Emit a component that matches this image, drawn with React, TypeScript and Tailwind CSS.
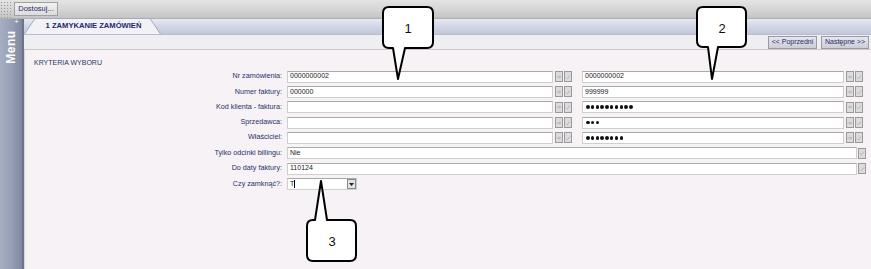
import React from "react";

const font = { fontFamily: '"Liberation Sans", Arial, sans-serif' };

function MiniBtn({ kind }: { kind: "a" | "b" }) {
  return (
    <div className="w-[8px] h-[11px] border border-[#9a9a9a] bg-[#dcdcdc] flex items-center justify-center">
      {kind === "a" ? (
        <svg width="6" height="6" viewBox="0 0 6 6">
          <path d="M0.5 3h4M3 1.5l1.5 1.5-1.5 1.5" stroke="#a8a8a8" strokeWidth="0.8" fill="none" />
        </svg>
      ) : (
        <svg width="6" height="6" viewBox="0 0 6 6">
          <path d="M1 3.5l1.3 1.3L5 1.5" stroke="#a8a8a8" strokeWidth="0.8" fill="none" />
        </svg>
      )}
    </div>
  );
}

function Input({ w, children }: { w: string; children?: React.ReactNode }) {
  return (
    <div
      className={`${w} h-[12px] bg-white border border-[#cfcfcf] border-t-[#a9a9a9] flex items-center pl-[2px] text-[7px] text-[#222] overflow-hidden`}
    >
      {children}
    </div>
  );
}

function Dots({ n }: { n: number }) {
  return (
    <div className="flex gap-[1.3px] pl-[1px]">
      {Array.from({ length: n }).map((_, i) => (
        <div key={i} className="w-[3.5px] h-[3.5px] rounded-full bg-[#111]" />
      ))}
    </div>
  );
}

function Label({ text }: { text: string }) {
  return (
    <div className="w-[257px] text-right text-[7.2px] text-[#28306a] whitespace-nowrap">{text}</div>
  );
}

function DoubleRow({
  label,
  a,
  b,
}: {
  label: string;
  a?: React.ReactNode;
  b?: React.ReactNode;
}) {
  return (
    <div className="flex items-center h-[15.3px]">
      <Label text={label} />
      <div className="ml-[5px]">
        <Input w="w-[266px]">{a}</Input>
      </div>
      <div className="ml-[2px] flex gap-[1px]">
        <MiniBtn kind="a" />
        <MiniBtn kind="b" />
      </div>
      <div className="ml-[10px]">
        <Input w="w-[262px]">{b}</Input>
      </div>
      <div className="ml-[2px] flex gap-[1px]">
        <MiniBtn kind="a" />
        <MiniBtn kind="b" />
      </div>
    </div>
  );
}

function WideRow({ label, value }: { label: string; value: string }) {
  return (
    <div className="flex items-center h-[15.5px]">
      <Label text={label} />
      <div className="ml-[5px]">
        <Input w="w-[570px]">{value}</Input>
      </div>
      <div className="ml-[1px]">
        <MiniBtn kind="b" />
      </div>
    </div>
  );
}

function Callouts() {
  return (
    <svg className="absolute left-0 top-0 pointer-events-none" width="871" height="269" viewBox="0 0 871 269">
      <g fill="#fff" stroke="#000" strokeWidth="2" strokeLinejoin="round">
        <path d="M389 7 H427 Q433 7 433 13 V42 Q433 48 427 48 H405 L398 79 L393 48 H389 Q383 48 383 42 V13 Q383 7 389 7 Z" />
        <path d="M703 7 H740 Q746 7 746 13 V41 Q746 47 740 47 H718 L712 79 L708 47 H703 Q697 47 697 41 V13 Q697 7 703 7 Z" />
        <path d="M313 220 H315 L321 181 L327 220 H350 Q356 220 356 226 V255 Q356 261 350 261 H313 Q307 261 307 255 V226 Q307 220 313 220 Z" />
      </g>
      <g fontFamily="Liberation Sans, Arial, sans-serif" fontSize="13" fill="#111" textAnchor="middle">
        <text x="408" y="33">1</text>
        <text x="722" y="33">2</text>
        <text x="332" y="246">3</text>
      </g>
    </svg>
  );
}

export default function App() {
  return (
    <div className="relative w-[871px] h-[269px] overflow-hidden bg-[#f6f2f6] flex flex-col" style={font}>
      {/* Top toolbar */}
      <div className="h-[19px] flex items-start bg-gradient-to-b from-[#e4e4e4] via-[#d6d6d6] to-[#c4c4c4] border-b border-[#b0b0b0]">
        <div className="w-[12px] h-[17px] mt-[1px] bg-[radial-gradient(circle,#9a9a9a_0.8px,transparent_0.9px)] bg-[length:3px_3px]" />
        <div className="ml-[2px] mt-[2px] h-[14px] w-[44px] border border-[#a0a0a0] bg-gradient-to-b from-[#f2f2f2] to-[#dcdcdc] flex items-center justify-center text-[7.5px] text-[#1f2a66]">
          Dostosuj...
        </div>
      </div>

      <div className="flex flex-1 min-h-0">
        {/* Sidebar */}
        <div className="w-[24px] relative bg-gradient-to-r from-[#a6aec2] via-[#97a0b6] to-[#7f889f] border-r-2 border-[#6c7488]">
          <div className="absolute right-[3px] top-[-1px] text-[8px] text-white leading-none">+</div>
          <div className="absolute left-[3px] top-[10px] h-[36px] w-[16px] flex items-center justify-center">
            <div className="-rotate-90 text-[12px] font-bold text-white tracking-[0.5px]">Menu</div>
          </div>
        </div>

        {/* Main */}
        <div className="flex-1 flex flex-col">
          {/* Tab strip */}
          <div className="h-[16px] flex items-end bg-gradient-to-b from-[#e8e9f2] via-[#d2d5e6] to-[#c3c7dc] border-b border-[#b8bccf]">
            <div className="relative w-[137px] h-[16px] flex items-center justify-center">
              <svg className="absolute left-0 top-0" width="137" height="16" viewBox="0 0 137 16">
                <path d="M0.5 16 L11 0.5 H126 L136.5 16" fill="#f1f1f6" stroke="#a6a9bd" strokeWidth="1" />
              </svg>
              <span className="relative text-[7.6px] font-bold text-[#1b2a6e] ml-[2px]">1 ZAMYKANIE ZAMÓWIEŃ</span>
            </div>
          </div>
          {/* Nav row */}
          <div className="h-[15px] bg-[#efeff2] border-b border-[#c9c9cc] flex items-center justify-end pr-[2px] gap-[4px]">
            <div className="h-[13px] w-[49px] border border-[#9a9aa4] bg-gradient-to-b from-[#e6e6ee] to-[#cdcdd8] flex items-center justify-center text-[7px] text-[#1f2a66] whitespace-nowrap">
              &lt;&lt; Poprzedni
            </div>
            <div className="h-[13px] w-[48px] border border-[#9a9aa4] bg-gradient-to-b from-[#e6e6ee] to-[#cdcdd8] flex items-center justify-center text-[7px] text-[#1f2a66] whitespace-nowrap">
              Następne &gt;&gt;
            </div>
          </div>
          {/* Content */}
          <div className="flex-1 flex flex-col border-l border-[#d8d6dc]">
            <div className="pl-[9px] pt-[8px] text-[7px] text-[#2c3468] h-[19px]">KRYTERIA WYBORU</div>
            <div className="flex flex-col">
              <DoubleRow label="Nr zamówienia:" a="0000000002" b="0000000002" />
              <DoubleRow label="Numer faktury:" a="000000" b="999999" />
              <DoubleRow label="Kod  klienta - faktura:" b={<Dots n={10} />} />
              <DoubleRow label="Sprzedawca:" b={<Dots n={3} />} />
              <DoubleRow label="Właściciel:" b={<Dots n={8} />} />
              <WideRow label="Tylko odcinki billingu:" value="Nie" />
              <WideRow label="Do daty faktury:" value="110124" />
              <div className="flex items-center h-[16px]">
                <Label text="Czy zamknąć?:" />
                <div className="ml-[5px] w-[70px] h-[12px] bg-white border border-[#cfcfcf] border-t-[#a9a9a9] flex items-center">
                  <span className="pl-[2px] text-[7px] text-[#222]">T</span>
                  <span className="w-[1px] h-[8px] bg-black" />
                  <div className="ml-auto w-[9px] h-[10px] border border-[#8a8a8a] bg-[#e2e2e2] flex items-center justify-center">
                    <svg width="5" height="3" viewBox="0 0 5 3">
                      <path d="M0 0 H5 L2.5 3 Z" fill="#222" />
                    </svg>
                  </div>
                </div>
              </div>
            </div>
          </div>
        </div>
      </div>
      <Callouts />
    </div>
  );
}
